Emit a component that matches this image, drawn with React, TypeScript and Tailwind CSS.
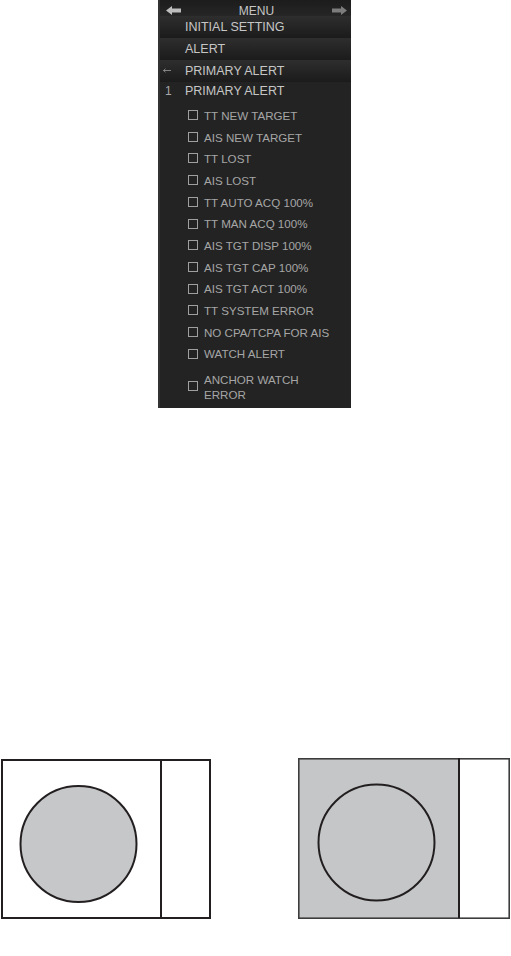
import React from "react";

const items = [
  "TT NEW TARGET",
  "AIS NEW TARGET",
  "TT LOST",
  "AIS LOST",
  "TT AUTO ACQ 100%",
  "TT MAN ACQ 100%",
  "AIS TGT DISP 100%",
  "AIS TGT CAP 100%",
  "AIS TGT ACT 100%",
  "TT SYSTEM ERROR",
  "NO CPA/TCPA FOR AIS",
  "WATCH ALERT",
];

function BlockArrow({ dir, color }: { dir: "left" | "right"; color: string }) {
  return (
    <svg width="15" height="9" viewBox="0 0 15 9" className={dir === "right" ? "-scale-x-100" : ""}>
      <polygon points="0,4.5 6,0 6,2.5 15,2.5 15,6.5 6,6.5 6,9" fill={color} />
    </svg>
  );
}

function MenuRow({ lead, label }: { lead?: React.ReactNode; label: string }) {
  return (
    <div className="h-[22px] flex items-center bg-gradient-to-b from-[#2e2e2e] to-[#1b1b1b]">
      <div className="w-[25px] pl-[3px] flex items-center text-[#9a9a9a]">{lead}</div>
      <span className="text-[12.5px] text-[#c6c6c6] leading-none">{label}</span>
    </div>
  );
}

function CheckBox() {
  return <div className="w-[10px] h-[10px] border border-[#9f9f9f] mb-[1px] mr-[6px] shrink-0" />;
}

export default function App() {
  return (
    <div className="w-[511px] h-[956px] bg-white font-['Liberation_Sans',Arial,sans-serif]">
      {/* menu panel */}
      <div className="ml-[158px] w-[193px] h-[408px] bg-[#232323] border-l-2 border-[#333333] flex flex-col">
        <div className="h-[16px] pt-[5px] pl-[6px] pr-[4px] flex items-center justify-between bg-gradient-to-b from-[#1c1c1c] to-[#262626]">
          <BlockArrow dir="left" color="#bdbdbd" />
          <span className="text-[12px] text-[#c6c6c6] leading-none">MENU</span>
          <BlockArrow dir="right" color="#7c7c7c" />
        </div>
        <MenuRow label="INITIAL SETTING" />
        <MenuRow label="ALERT" />
        <MenuRow
          label="PRIMARY ALERT"
          lead={
            <svg width="8" height="5" viewBox="0 0 8 5">
              <path d="M0.5 2.5H8M0.5 2.5L2.5 0.8M0.5 2.5L2.5 4.2" stroke="#9a9a9a" strokeWidth="0.8" fill="none" />
            </svg>
          }
        />
        <div className="h-[18px] flex items-center">
          <div className="w-[25px] pl-[5px] text-[12px] text-[#a8a8a8] leading-none">1</div>
          <span className="text-[12.5px] text-[#c6c6c6] leading-none">PRIMARY ALERT</span>
        </div>
        <div className="pt-[5px] flex flex-col">
          {items.map((t) => (
            <div key={t} className="h-[21.7px] pl-[28px] flex items-center">
              <CheckBox />
              <span className="text-[11.6px] text-[#a6a6a6] leading-none">{t}</span>
            </div>
          ))}
          <div className="h-[43px] pl-[28px] flex items-center">
            <CheckBox />
            <span className="text-[11.6px] text-[#a6a6a6] leading-[15px]">
              ANCHOR WATCH
              <br />
              ERROR
            </span>
          </div>
        </div>
      </div>

      {/* figures */}
      <div className="mt-[349px] flex justify-between">
        <svg width="212" height="163" viewBox="0 0 212 163">
          <rect x="2" y="3" width="208" height="158" fill="#fff" stroke="#231f20" strokeWidth="2" />
          <line x1="161" y1="3" x2="161" y2="161" stroke="#231f20" strokeWidth="2" />
          <circle cx="78.5" cy="87" r="58" fill="#c6c7c9" stroke="#231f20" strokeWidth="2" />
        </svg>
        <svg width="214" height="163" viewBox="0 0 214 163">
          <rect x="1" y="1" width="161" height="160" fill="#c5c6c8" />
          <rect x="1.8" y="1.8" width="210.4" height="159.4" fill="none" stroke="#3c3c3c" strokeWidth="1.6" />
          <line x1="162" y1="1" x2="162" y2="161" stroke="#231f20" strokeWidth="2" />
          <circle cx="79.5" cy="85.5" r="58" fill="#c5c6c8" stroke="#231f20" strokeWidth="2" />
        </svg>
      </div>
    </div>
  );
}
